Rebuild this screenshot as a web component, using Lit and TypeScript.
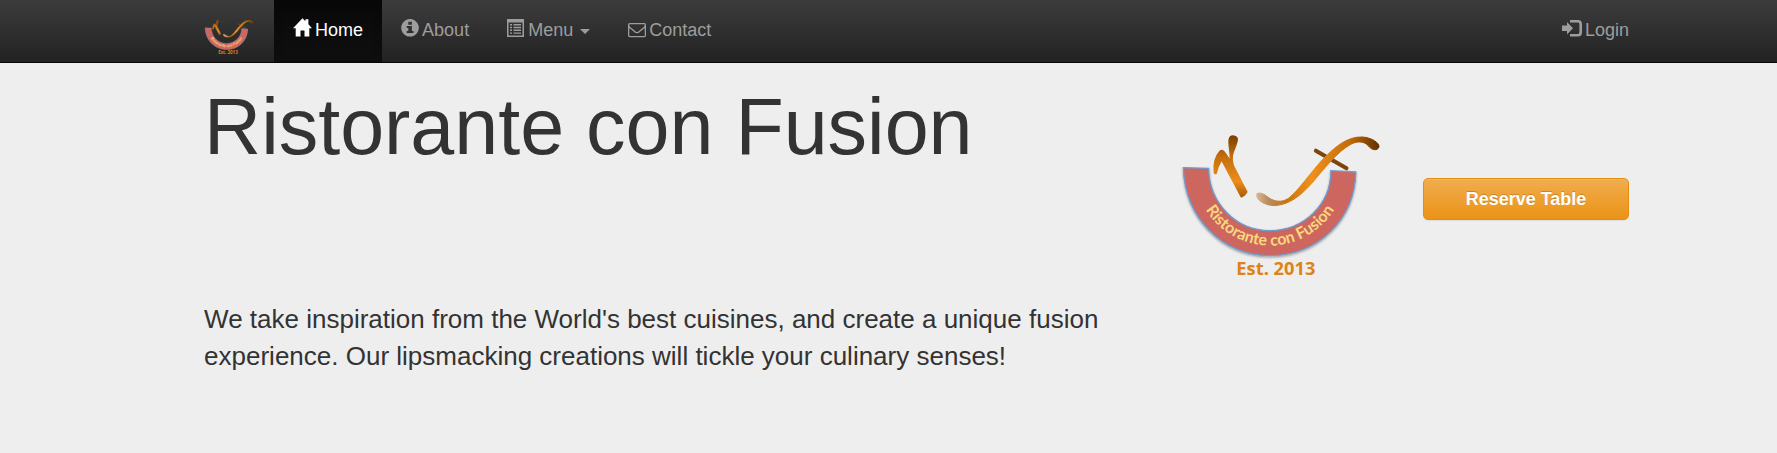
import { LitElement, html, css, svg } from "lit";
import { customElement } from "lit/decorators.js";

@customElement("fusion-logo")
export class FusionLogo extends LitElement {
  static styles = css`
    :host { display: block; }
    svg { display: block; width: 100%; height: auto; }
    .ring { font: 700 48px Lato, "Open Sans", sans-serif; fill: #fbd77c; }
    .est { font: 700 55px "Open Sans", Lato, sans-serif; fill: #dd8318; }
  `;

  render() {
    return html`
      <svg viewBox="27 21 618 444" role="img" aria-label="Ristorante con Fusion, Est. 2013">
        <defs>
          <linearGradient id="r" x1="0" y1="0" x2="0" y2="1">
            <stop offset="0" stop-color="#7a4100" />
            <stop offset="0.35" stop-color="#c56f0c" />
            <stop offset="0.75" stop-color="#ec8d1b" />
            <stop offset="1" stop-color="#a85b05" />
          </linearGradient>
          <linearGradient id="f" gradientUnits="userSpaceOnUse" x1="260" y1="0" x2="628" y2="0">
            <stop offset="0" stop-color="#d9b692" />
            <stop offset="0.1" stop-color="#b98a5c" />
            <stop offset="0.24" stop-color="#c8730f" />
            <stop offset="0.45" stop-color="#ef901c" />
            <stop offset="0.75" stop-color="#c56d08" />
            <stop offset="0.9" stop-color="#8a4900" />
            <stop offset="1" stop-color="#5f3000" />
          </linearGradient>
          <filter id="s" x="-10%" y="-10%" width="120%" height="130%">
            <feDropShadow dx="0" dy="4" stdDeviation="3" flood-color="#000" flood-opacity="0.35" />
          </filter>
          <path id="arc" d="M73 135A227 227 0 0 0 527 135" />
        </defs>
        <path
          d="M40 128L116 130C118 236 198 317 300 317C402 317 484 238 483 137L558 141C555 284 444 392 300 392C154 392 44 276 40 128Z"
          fill="#cd665f" stroke="#6f9bd0" stroke-width="4" filter="url(#s)" />
        <text class="ring" text-anchor="middle"><textPath href="#arc" startOffset="50%">Ristorante con Fusion</textPath></text>
        <text class="est" x="318" y="449" text-anchor="middle">Est. 2013</text>
        <path
          d="M133 143C130 116 138 92 150 79Q156 73 162 80C170 90 175 98 180 106C184 85 174 60 178 42C182 28 203 32 202 45C201 60 190 74 187 92Q185 106 190 122L231 201Q224 213 214 216L155 105C147 118 142 130 139 145Q135 148 133 143Z"
          fill="url(#r)" stroke="url(#r)" stroke-width="4" />
        <path d="M438 77L530 130" stroke="#7d440b" stroke-width="12" stroke-linecap="round" />
        <path
          d="M261 206C270 201 284 208 296 218C312 230 337 234 356 220C383 201 426 137 460 102C496 65 533 34 577 36C604 37 632 55 627 67C622 79 605 75 596 63C582 47 560 48 543 58C502 80 460 135 426 175C390 215 357 239 315 242C285 242 255 225 261 206Z"
          fill="url(#f)" stroke="url(#f)" stroke-width="3" />
      </svg>
    `;
  }
}

const icons = {
  home: svg`<path d="M9.500 0.300L12.400 3.300V1.200H15.400V6.200L19 10.200H16.300V18.500H11.500V12.500H7.500V18.500H2.700V10.200H0Z" />`,
  info: svg`<path fill-rule="evenodd" d="M9 1a8.800 8.800 0 1 0 .01 0ZM7.300 3.800h3.600v2.900H7.300ZM5.700 7.900h5.200v5h1.600v2H5.700v-2h1.600V9.900H5.700Z" />`,
  list: svg`<path fill-rule="evenodd" d="M0 1H17V19H0ZM1.500 4.500V17.500H15.500V4.500ZM3 6h2v1.400H3Zm3.500 0H14v1.400H6.500ZM3 8.800h2v1.400H3Zm3.500 0H14v1.400H6.500ZM3 11.600h2V13H3Zm3.500 0H14V13H6.500ZM3 14.400h2v1.400H3Zm3.500 0H14v1.400H6.500Z" />`,
  mail: svg`<path transform="translate(0 2.500) scale(.01005)" d="M1664 1504v-768q-32 36-69 66-268 206-426 338-51 43-83 67t-86.500 48.500-102.500 24.500h-2q-48 0-102.500-24.500t-86.500-48.500-83-67q-158-132-426-338-37-30-69-66v768q0 13 9.500 22.500t22.500 9.500h1472q13 0 22.500-9.500t9.500-22.500zm0-1051v-24.500l-.5-13-3-12.500-5.500-9-9-7.500-14-2.500h-1472q-13 0-22.500 9.500t-9.500 22.500q0 168 147 284 193 152 401 317 6 5 35 29.500t46 37.500 44.500 31.500 50.500 27.500 43 9h2q20 0 43-9t50.500-27.500 44.500-31.500 46-37.500 35-29.500q208-165 401-317 54-43 100.500-115.500t46.500-131.500zm128-37v1088q0 66-47 113t-113 47h-1472q-66 0-113-47t-47-113v-1088q0-66 47-113t113-47h1472q66 0 113 47t47 113z" />`,
  login: svg`<path d="M0 7.500H5V4L11 10.300L5 16.500V13H0Z" /><path d="M8 3.200H16Q18.700 3.200 18.700 6V14.600Q18.700 17.300 16 17.300H8" fill="none" stroke="currentColor" stroke-width="2.600" />`,
};

const icon = (name: keyof typeof icons, width: number) => html`
  <svg class="icon" width=${width} height="20" viewBox="0 0 ${width} 20" aria-hidden="true">${icons[name]}</svg>`;

@customElement("app-root")
export class AppRoot extends LitElement {
  static styles = css`
    :host {
      display: block;
      min-height: 100vh;
      background: #eee;
      color: #333;
      font-family: "Liberation Sans", Arial, sans-serif;
      --edge: calc(100% / 12);
    }
    .bar {
      display: flex;
      align-items: stretch;
      height: 62px;
      padding: 0 var(--edge) 0 calc(var(--edge) + 56px);
      background: linear-gradient(#3c3c3c, #222);
      border-bottom: 1px solid #080808;
    }
    .brand { width: 51px; margin: 19px 19px 0 0; }
    .links { display: flex; flex: 1; margin: 0; padding: 0; list-style: none; }
    .end { margin-left: auto; }
    .link {
      display: flex;
      align-items: flex-start;
      gap: 3px;
      height: 62px;
      box-sizing: border-box;
      padding: 18px 19px 0;
      color: #9d9d9d;
      font-size: 18px;
      line-height: 24px;
      text-decoration: none;
    }
    .link.active {
      color: #fff;
      background: linear-gradient(#080808, #0f0f0f);
      box-shadow: inset 0 4px 11px rgba(0, 0, 0, 0.075);
    }
    .end .link { padding-right: 0; }
    .icon { display: block; fill: currentColor; flex: none; }
    .caret {
      margin: 11px 0 0 4px;
      border: 5px solid transparent;
      border-top-color: currentColor;
      border-bottom: 0;
    }
    .hero {
      display: grid;
      grid-template-columns: repeat(12, minmax(0, 1fr));
      column-gap: 38px;
      align-items: start;
      padding: 24px var(--edge) 60px calc(var(--edge) + 56px);
    }
    .intro { grid-column: span 8; display: grid; gap: 135px; }
    h1 { margin: 0; font-size: 79px; line-height: 79px; font-weight: 500; }
    p { margin: 0; font-size: 26px; line-height: 37px; }
    .emblem { grid-column: span 2; margin-top: 45px; }
    .reserve {
      grid-column: span 2;
      width: 100%;
      margin: 91px 0 0;
      padding: 8px 15px;
      border: 1px solid #e38d13;
      border-radius: 5px;
      background: linear-gradient(#f0ad4e, #eb9316);
      box-shadow: inset 0 1px 0 rgba(255, 255, 255, 0.15), 0 1px 1px rgba(0, 0, 0, 0.075);
      color: #fff;
      font: 700 18px/24px "Liberation Sans", Arial, sans-serif;
      text-shadow: 0 -1px 0 rgba(0, 0, 0, 0.2);
      cursor: pointer;
    }
  `;

  render() {
    return html`
      <nav class="bar">
        <a class="brand" href="#"><fusion-logo></fusion-logo></a>
        <ul class="links">
          <li><a class="link active" href="#home" aria-current="page">${icon("home", 19)}Home</a></li>
          <li><a class="link" href="#about">${icon("info", 18)}About</a></li>
          <li><a class="link" href="#menu">${icon("list", 18)}Menu<span class="caret"></span></a></li>
          <li><a class="link" href="#contact">${icon("mail", 18)}Contact</a></li>
          <li class="end"><a class="link" href="#login">${icon("login", 20)}Login</a></li>
        </ul>
      </nav>
      <header class="hero">
        <div class="intro">
          <h1>Ristorante con Fusion</h1>
          <p>We take inspiration from the World's best cuisines, and create a unique fusion experience. Our lipsmacking creations will tickle your culinary senses!</p>
        </div>
        <fusion-logo class="emblem"></fusion-logo>
        <button class="reserve" type="button">Reserve Table</button>
      </header>
    `;
  }
}
